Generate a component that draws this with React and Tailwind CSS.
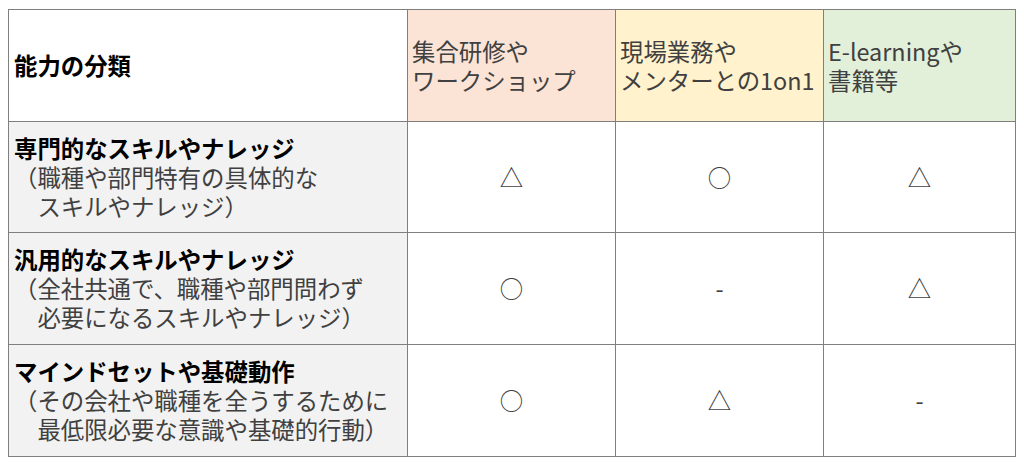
import React from "react";

const headers = [
  { lines: ["集合研修や", "ワークショップ"], bg: "bg-[#fbe4d6]" },
  { lines: ["現場業務や", "メンターとの1on1"], bg: "bg-[#fff2cc]" },
  { lines: ["E-learningや", "書籍等"], bg: "bg-[#e2efd9]" },
];

const rows = [
  {
    title: "専門的なスキルやナレッジ",
    notes: ["（職種や部門特有の具体的な", "　スキルやナレッジ）"],
    marks: ["△", "○", "△"],
    h: "h-[111px]",
  },
  {
    title: "汎用的なスキルやナレッジ",
    notes: ["（全社共通で、職種や部門問わず", "　必要になるスキルやナレッジ）"],
    marks: ["○", "-", "△"],
    h: "h-[112px]",
  },
  {
    title: "マインドセットや基礎動作",
    notes: ["（その会社や職種を全うするために", "　最低限必要な意識や基礎的行動）"],
    marks: ["○", "△", "-"],
    h: "h-[112px]",
  },
];

export default function App() {
  return (
    <div
      className="w-[1024px] h-[464px] bg-white overflow-hidden pt-[9px] pl-[8px]"
      style={{ fontFamily: '"Noto Sans CJK JP", "Noto Sans", sans-serif' }}
    >
      <div className="grid grid-cols-[399px_208px_208px_192px] w-[1008px] border-t border-l border-[#7f7f7f] text-[23.4px] leading-[29px]">
        {/* Header */}
        <div className="h-[112px] border-r border-b border-[#7f7f7f] bg-white flex items-center pl-[5px] font-bold text-black">
          能力の分類
        </div>
        {headers.map((h, i) => (
          <div
            key={i}
            className={`h-[112px] border-r border-b border-[#7f7f7f] ${h.bg} flex flex-col justify-center pl-[4px] text-[#404040] whitespace-nowrap`}
          >
            {h.lines.map((l, j) => (
              <div key={j}>{l}</div>
            ))}
          </div>
        ))}

        {/* Body */}
        {rows.map((r, i) => (
          <React.Fragment key={i}>
            <div
              className={`${r.h} border-r border-b border-[#7f7f7f] bg-[#f2f2f2] flex flex-col justify-center pl-[5px] whitespace-nowrap`}
            >
              <div className="font-bold text-black">{r.title}</div>
              {r.notes.map((n, j) => (
                <div key={j} className="text-[#404040] whitespace-pre">
                  {n}
                </div>
              ))}
            </div>
            {r.marks.map((m, j) => (
              <div
                key={j}
                className={`${r.h} border-r border-b border-[#7f7f7f] bg-white flex items-center justify-center text-[#404040]`}
              >
                {m}
              </div>
            ))}
          </React.Fragment>
        ))}
      </div>
    </div>
  );
}
